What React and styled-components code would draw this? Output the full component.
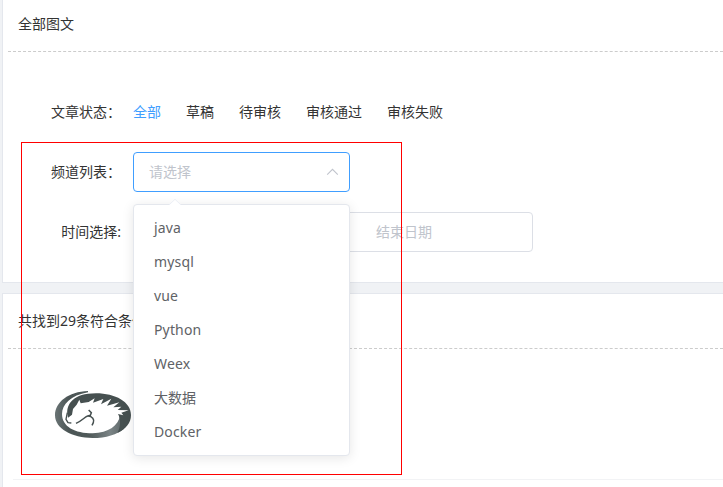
import React from 'react';
import styled, { createGlobalStyle } from 'styled-components';

const GlobalStyle = createGlobalStyle`
  * { box-sizing: border-box; }
  body {
    margin: 0;
    overflow: hidden;
    background: #f0f2f5;
    color: #333;
    font: 14px/20px "Noto Sans", "Noto Sans CJK SC", sans-serif;
  }
`;

const Page = styled.div`
  position: relative;
  display: flex;
  flex-direction: column;
  gap: 10px;
  width: 723px;
  height: 487px;
  overflow: hidden;
  padding-left: 2px;
`;

const Card = styled.section`
  flex: none;
  height: ${(p) => p.$height}px;
  background: #fff;
  border: 1px solid #e4e7ed;
  border-width: ${(p) => (p.$first ? '0 0 1px 1px' : '1px 0 0 1px')};
  padding-left: 5px;
`;

const CardHeader = styled.header`
  height: ${(p) => p.$height}px;
  padding: ${(p) => p.$top}px 0 0 10px;
  border-bottom: 1px dashed #ccc;
  white-space: nowrap;
`;

const Form = styled.div`
  display: flex;
  flex-direction: column;
  gap: 20px;
  padding-top: 40px;
`;

const FormRow = styled.div`
  display: flex;
  align-items: center;
  height: 40px;
`;

const Label = styled.label`
  width: 125px;
  padding-right: 12px;
  text-align: right;
  white-space: nowrap;
`;

const StatusList = styled.div`
  display: flex;
  gap: 25px;
`;

const Status = styled.span`
  color: ${(p) => (p.$active ? '#409eff' : '#333')};
`;

const Select = styled.div`
  position: relative;
  display: flex;
  align-items: center;
  justify-content: space-between;
  width: 217px;
  height: 40px;
  padding: 0 10px 0 15px;
  border: 1px solid #409eff;
  border-radius: 4px;
  color: #c0c4cc;
`;

const Menu = styled.ul`
  position: absolute;
  z-index: 2;
  top: 51px;
  left: -1px;
  width: 217px;
  margin: 0;
  padding: 6px 0;
  list-style: none;
  color: #606266;
  background: #fff;
  border: 1px solid #e4e7ed;
  border-radius: 4px;
  box-shadow: 0 2px 12px rgba(0, 0, 0, 0.1);
`;

const MenuArrow = styled.svg`
  position: absolute;
  top: -6px;
  left: 35px;
`;

const Option = styled.li`
  height: 34px;
  padding: 0 20px;
  line-height: 34px;
  letter-spacing: ${(p) => (p.$latin ? '0.15px' : '0')};
`;

const DateRange = styled.div`
  display: flex;
  align-items: center;
  width: 400px;
  height: 40px;
  padding-left: 242px;
  border: 1px solid #dcdfe6;
  border-radius: 4px;
  color: #c0c4cc;
`;

const Article = styled.article`
  height: 131px;
  margin-left: 5px;
  padding: 31px 0 0 27px;
  border-bottom: 1px solid #f2f3f5;
`;

const Outline = styled.div`
  position: absolute;
  z-index: 3;
  top: 142px;
  left: 21px;
  width: 381px;
  height: 333px;
  border: 1px solid #f00;
  pointer-events: none;
`;

const statuses = ['全部', '草稿', '待审核', '审核通过', '审核失败'];
const channels = ['java', 'mysql', 'vue', 'Python', 'Weex', '大数据', 'Docker'];

function HorseLogo() {
  return (
    <svg width="110" height="70" viewBox="0 0 330 210">
      <defs>
        <linearGradient id="ring" x1="0" y1="0" x2="1" y2="0">
          <stop offset="0" stopColor="#6a7475" />
          <stop offset="0.2" stopColor="#4b5555" />
          <stop offset="0.5" stopColor="#505a5a" />
          <stop offset="0.8" stopColor="#7b8486" />
          <stop offset="1" stopColor="#5c6667" />
        </linearGradient>
      </defs>
      {/* outer crescent sweeping under the horse */}
      <path
        fill="url(#ring)"
        d="M144 33C86 35 45 66 45 106C45 146 96 174 158 174C198 174 232 163 252 146L240 106C236 136 206 159 158 160C104 160 66 140 66 102C66 74 92 46 144 37Z"
      />
      {/* dark field behind the mane, closing the ring on the right */}
      <path
        fill="#465050"
        d="M82 101C80 73 99 40 168 40C226 40 273 66 273 105C273 129 257 147 232 159C242 142 243 118 234 102L250 106L244 98L266 91L233 90L244 80L220 82L238 67L201 77L214 56L183 73L190 57L159 68L164 55L146 66L122 70L118 59L110 74L99 87L96 104L84 113Z"
      />
      <path d="M82 98L78 118L84 128L94 129" fill="none" stroke="#465050" strokeWidth="4" strokeLinejoin="round" />
      <path d="M146 90L154 98L151 106L143 108C132 112 130 120 108 130M144 108C157 109 164 118 160 128L156 136" fill="none" stroke="#465050" strokeWidth="4.5" />
    </svg>
  );
}

export default function App() {
  return (
    <>
      <GlobalStyle />
      <Page>
        <Card $first $height={283}>
          <CardHeader $height={52} $top={14}>全部图文</CardHeader>
          <Form>
            <FormRow>
              <Label>文章状态：</Label>
              <StatusList>
                {statuses.map((name, i) => (
                  <Status key={name} $active={i === 0}>{name}</Status>
                ))}
              </StatusList>
            </FormRow>
            <FormRow>
              <Label>频道列表：</Label>
              <Select>
                请选择
                <svg width="13" height="8" viewBox="0 0 13 8" fill="none" stroke="#c0c4cc" strokeWidth="1.1">
                  <path d="M1.2 6.7L6.5 1.4L11.8 6.7" />
                </svg>
                <Menu>
                  <MenuArrow width="12" height="7" viewBox="0 0 12 7">
                    <path d="M0 6L6 0L12 6V7H0Z" fill="#fff" />
                    <path d="M0 6L6 0.3L12 6" fill="none" stroke="#ebeef5" />
                  </MenuArrow>
                  {channels.map((name) => (
                    <Option key={name} $latin={/^[a-z]/i.test(name)}>{name}</Option>
                  ))}
                </Menu>
              </Select>
            </FormRow>
            <FormRow>
              <Label>时间选择:</Label>
              <DateRange>结束日期</DateRange>
            </FormRow>
          </Form>
        </Card>
        <Card $height={194}>
          <CardHeader $height={55} $top={17}>共找到29条符合条件</CardHeader>
          <Article>
            <HorseLogo />
          </Article>
        </Card>
        <Outline />
      </Page>
    </>
  );
}
